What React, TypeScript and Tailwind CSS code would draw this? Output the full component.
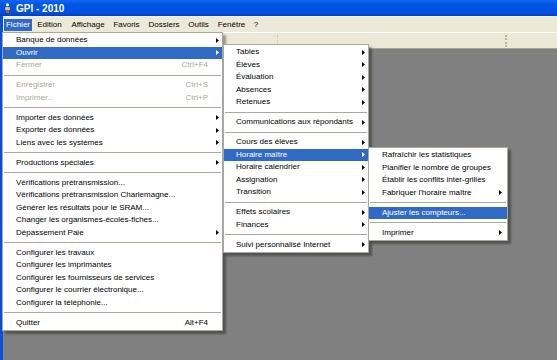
import React from 'react'
import clsx from 'clsx'

type Item = { label: string; shortcut?: string; arrow?: boolean; disabled?: boolean; active?: boolean } | 'sep'

const fichier: Item[] = [
    { label: 'Banque de données', arrow: true },
    { label: 'Ouvrir', arrow: true, active: true },
    { label: 'Fermer', shortcut: 'Ctrl+F4', disabled: true },
    'sep',
    { label: 'Enregistrer', shortcut: 'Ctrl+S', disabled: true },
    { label: 'Imprimer...', shortcut: 'Ctrl+P', disabled: true },
    'sep',
    { label: 'Importer des données', arrow: true },
    { label: 'Exporter des données', arrow: true },
    { label: 'Liens avec les systèmes', arrow: true },
    'sep',
    { label: 'Productions spéciales', arrow: true },
    'sep',
    { label: 'Vérifications prétransmission...' },
    { label: 'Vérifications prétransmission Charlemagne...' },
    { label: 'Générer les résultats pour le SRAM...' },
    { label: 'Changer les organismes-écoles-fiches...' },
    { label: 'Dépassement Paie', arrow: true },
    'sep',
    { label: 'Configurer les travaux' },
    { label: 'Configurer les imprimantes' },
    { label: 'Configurer les fournisseurs de services' },
    { label: 'Configurer le courrier électronique...' },
    { label: 'Configurer la téléphonie...' },
    'sep',
    { label: 'Quitter', shortcut: 'Alt+F4' },
]

const ouvrir: Item[] = [
    { label: 'Tables', arrow: true },
    { label: 'Élèves', arrow: true },
    { label: 'Évaluation', arrow: true },
    { label: 'Absences', arrow: true },
    { label: 'Retenues', arrow: true },
    'sep',
    { label: 'Communications aux répondants', arrow: true },
    'sep',
    { label: 'Cours des élèves', arrow: true },
    { label: 'Horaire maître', arrow: true, active: true },
    { label: 'Horaire calendrier', arrow: true },
    { label: 'Assignation', arrow: true },
    { label: 'Transition', arrow: true },
    'sep',
    { label: 'Effets scolaires', arrow: true },
    { label: 'Finances', arrow: true },
    'sep',
    { label: 'Suivi personnalisé Internet', arrow: true },
]

const horaire: Item[] = [
    { label: 'Rafraîchir les statistiques' },
    { label: 'Planifier le nombre de groupes' },
    { label: 'Établir les conflits inter-grilles' },
    { label: "Fabriquer l'horaire maître", arrow: true },
    'sep',
    { label: 'Ajuster les compteurs...', active: true },
    'sep',
    { label: 'Imprimer', arrow: true },
]

function Arrow({ white }: { white?: boolean }) {
    return (
        <svg width="3" height="5" viewBox="0 0 3 5">
            <path d="M0 0 L3 2.5 L0 5Z" fill={white ? '#fff' : '#000'} />
        </svg>
    )
}

function Menu({ items, className, pl, pr, shortcutPr }: { items: Item[]; className: string; pl: string; pr: string; shortcutPr?: string }) {
    return (
        <div className={clsx('absolute bg-white border border-[#aca899] py-[1px] shadow-[3px_3px_2px_rgba(0,0,0,0.35)]', className)}>
            {items.map((it, i) =>
                it === 'sep' ? (
                    <div key={i} className="h-[7.5px] flex items-center px-[1px]">
                        <div className="h-px w-full bg-[#aca899]"></div>
                    </div>
                ) : (
                    <div key={i}
                        className={clsx('h-[12.5px] flex items-center whitespace-nowrap',
                            it.active && 'bg-[#316ac5] text-white',
                            it.disabled && 'text-[#aca899]')}>
                        <span className={clsx('flex-1', pl)}>{it.label}</span>
                        {it.shortcut && <span className={shortcutPr}>{it.shortcut}</span>}
                        {it.arrow && <span className={clsx('flex items-center', pr)}><Arrow white={it.active} /></span>}
                    </div>
                )
            )}
        </div>
    )
}

const menuBar = [
    { label: 'Fichier', w: 'w-[28px]', active: true },
    { label: 'Edition', w: 'w-[35px]' },
    { label: 'Affichage', w: 'w-[42px]' },
    { label: 'Favoris', w: 'w-[35px]' },
    { label: 'Dossiers', w: 'w-[40px]' },
    { label: 'Outils', w: 'w-[29px]' },
    { label: 'Fenêtre', w: 'w-[37px]' },
    { label: '?', w: 'w-[12px]' },
]

export default function App() {
    return (
        <div className="relative w-[557px] h-[360px] overflow-hidden flex flex-col bg-[#808080] text-[8px] text-black font-['Liberation_Sans',Arial,sans-serif]">
            {/* title bar */}
            <div className="h-[16px] flex items-center gap-[4px] pl-[4px] bg-[linear-gradient(#1266ee,#0055e5_30%,#0052e0_75%,#0040c8)]">
                <svg width="7" height="10" viewBox="0 0 7 10">
                    <circle cx="3.5" cy="1.8" r="1.5" fill="#fff" />
                    <path d="M1.5 4 L5.5 4 L6 7 L4.5 7 L4.5 10 L2.5 10 L2.5 7 L1 7Z" fill="#f5c04a" />
                    <path d="M2.5 7 L4.5 7 L4.5 10 L2.5 10Z" fill="#e0401a" />
                </svg>
                <span className="text-white font-bold text-[10px] ml-[1px]">GPI - 2010</span>
            </div>

            <div className="flex-1 flex flex-col border-l-[3px] border-[#0a4fd8]">
                {/* menu bar */}
                <div className="h-[16px] flex items-end pb-[1px] pl-[1px] bg-[#ece9d8] border-t border-[#f4f1e6]">
                    {menuBar.map(m => (
                        <div key={m.label}
                            className={clsx('h-[12px] flex items-center justify-center', m.w, m.active && 'bg-[#316ac5] text-white')}>
                            {m.label}
                        </div>
                    ))}
                </div>

                {/* toolbar */}
                <div className="h-[17px] flex items-center bg-[#ece9d8] border-t border-white border-b border-b-[#aca899]">
                    <div className="ml-[274px] h-[12px] border-l border-dotted border-[#c8c4b0]"></div>
                    <div className="ml-[227px] h-[12px] w-[2px] border-l-2 border-dotted border-[#b8b4a0]"></div>
                </div>

                <div className="flex-1 bg-[#808080]"></div>
            </div>

            <Menu items={fichier} className="left-[2px] top-[32px] w-[221px]" pl="pl-[13px]" pr="pr-[3px]" shortcutPr="pr-[14px]" />
            <Menu items={ouvrir} className="left-[223px] top-[44px] w-[146px]" pl="pl-[12px]" pr="pr-[3px]" />
            <Menu items={horaire} className="left-[368px] top-[147px] w-[140px]" pl="pl-[13px]" pr="pr-[5px]" />
        </div>
    )
}
